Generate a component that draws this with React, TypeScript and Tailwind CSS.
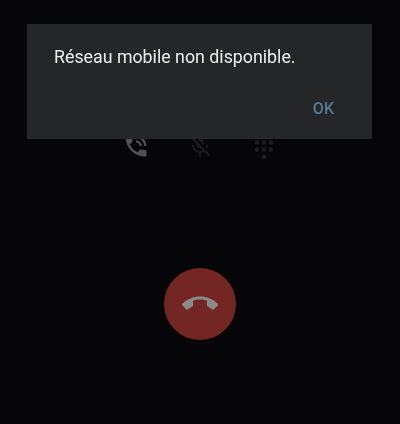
import React from 'react';

const hangup =
  'M12 9c-1.6 0-3.15.25-4.6.72v3.1c0 .39-.23.74-.56.9-.98.49-1.87 1.12-2.66 1.85-.18.18-.43.28-.7.28-.28 0-.53-.11-.71-.29L.29 13.08c-.18-.17-.29-.42-.29-.7 0-.28.11-.53.29-.71C3.34 8.78 7.46 7 12 7s8.66 1.78 11.71 4.67c.18.18.29.43.29.71 0 .28-.11.53-.29.71l-2.48 2.48c-.18.18-.43.29-.71.29-.27 0-.52-.11-.7-.28-.79-.74-1.69-1.36-2.67-1.85-.33-.16-.56-.5-.56-.9v-3.1C15.15 9.25 13.6 9 12 9z';

function PhoneIcon() {
  return (
    <svg viewBox="0 0 24 24" className="w-7 h-7 text-[#505052] blur-[0.5px]" fill="currentColor">
      <path d="M20 15.5c-1.25 0-2.45-.2-3.57-.57-.35-.11-.74-.03-1.02.24l-2.2 2.2c-2.83-1.44-5.15-3.75-6.59-6.59l2.2-2.21c.28-.26.36-.65.25-1C8.7 6.45 8.5 5.25 8.5 4c0-.55-.45-1-1-1H4c-.55 0-1 .45-1 1 0 9.39 7.61 17 17 17 .55 0 1-.45 1-1v-3.5c0-.55-.45-1-1-1z" />
      <path d="M12 3v2a7 7 0 0 1 7 7h2a9 9 0 0 0-9-9zm0 4v2a3 3 0 0 1 3 3h2a5 5 0 0 0-5-5z" />
    </svg>
  );
}

function MicOffIcon() {
  return (
    <svg viewBox="0 0 24 24" className="w-7 h-7 text-[#1c1c1f] blur-[0.5px]" fill="currentColor">
      <path d="M19 11h-1.7c0 .74-.16 1.43-.43 2.05l1.23 1.23c.56-.98.9-2.09.9-3.28zm-4.02.17c0-.06.02-.11.02-.17V5c0-1.66-1.34-3-3-3S9 3.34 9 5v.18l5.98 5.99zM4.27 3 3 4.27l6.01 6.01V11c0 1.66 1.33 3 2.99 3 .22 0 .44-.03.65-.08l1.66 1.66c-.71.33-1.5.52-2.31.52-2.76 0-5.3-2.1-5.3-5.1H5c0 3.41 2.72 6.23 6 6.72V21h2v-3.28c.91-.13 1.77-.45 2.54-.9L19.73 21 21 19.73 4.27 3z" />
    </svg>
  );
}

function DialpadIcon() {
  return (
    <svg viewBox="0 0 24 24" className="w-7 h-7 text-[#1c1c1f] blur-[0.5px]" fill="currentColor">
      <path d="M12 19c-1.1 0-2 .9-2 2s.9 2 2 2 2-.9 2-2-.9-2-2-2zM6 1c-1.1 0-2 .9-2 2s.9 2 2 2 2-.9 2-2-.9-2-2-2zm0 6c-1.1 0-2 .9-2 2s.9 2 2 2 2-.9 2-2-.9-2-2-2zm0 6c-1.1 0-2 .9-2 2s.9 2 2 2 2-.9 2-2-.9-2-2-2zm12-8c1.1 0 2-.9 2-2s-.9-2-2-2-2 .9-2 2 .9 2 2 2zm-6 8c-1.1 0-2 .9-2 2s.9 2 2 2 2-.9 2-2-.9-2-2-2zm6 0c-1.1 0-2 .9-2 2s.9 2 2 2 2-.9 2-2-.9-2-2-2zm0-6c-1.1 0-2 .9-2 2s.9 2 2 2 2-.9 2-2-.9-2-2-2zm-6 0c-1.1 0-2 .9-2 2s.9 2 2 2 2-.9 2-2-.9-2-2-2zm0-6c-1.1 0-2 .9-2 2s.9 2 2 2 2-.9 2-2-.9-2-2-2z" />
    </svg>
  );
}

export default function App() {
  return (
    <div className="relative w-[400px] h-[424px] overflow-hidden bg-[#060609] font-['Roboto',sans-serif]">
      {/* call screen, dimmed behind the dialog */}
      <div className="flex flex-col items-center pt-[132px]">
        <div className="flex w-full pl-[122px] gap-[36px]">
          <PhoneIcon />
          <MicOffIcon />
          <DialpadIcon />
        </div>
        <div className="mt-[108px] w-[72px] h-[72px] rounded-full bg-[#742624] flex items-center justify-center">
          <svg viewBox="0 0 24 24" className="w-9 h-9 text-[#8a8a87] blur-[0.3px]" fill="currentColor">
            <path d={hangup} />
          </svg>
        </div>
      </div>

      <div className="absolute left-[27px] top-[24px] w-[345px] h-[115px] bg-[#252628] flex flex-col">
        <p className="pl-[27px] pt-[22px] text-[17.8px] leading-[22px] text-[#ededed] blur-[0.2px]">Réseau mobile non disponible.</p>
        <div className="flex justify-end pr-[38px] pt-[30px]">
          <span className="text-[16px] leading-[22px] font-medium text-[#587899] blur-[0.2px]">OK</span>
        </div>
      </div>
    </div>
  );
}
